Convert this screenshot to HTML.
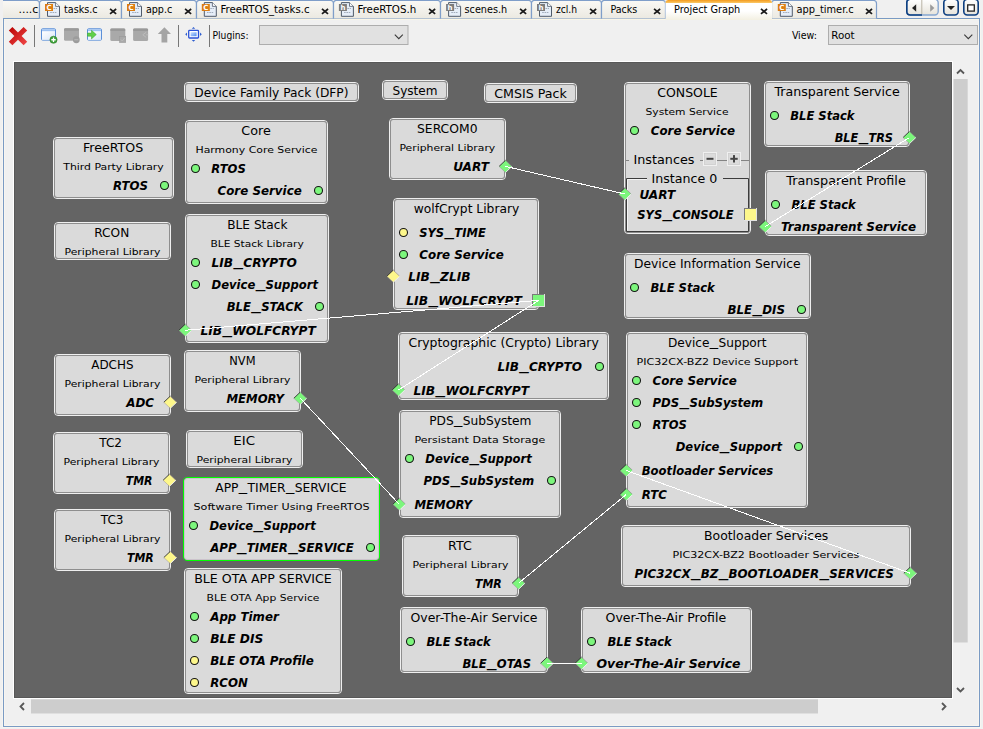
<!DOCTYPE html><html><head><meta charset="utf-8"><title>Project Graph</title><style>
html,body{margin:0;padding:0;background:#f0f0f0;overflow:hidden}svg{display:block}
text{fill:#000;white-space:pre}
.t{font-family:'DejaVu Sans','Liberation Sans',sans-serif;font-size:12px}.s{font-family:'DejaVu Sans','Liberation Sans',sans-serif;font-size:9.4px}.p{font-family:'DejaVu Sans','Liberation Sans',sans-serif;font-size:11.9px;font-weight:bold;font-style:italic}.u{font-family:'DejaVu Sans Condensed','DejaVu Sans','Liberation Sans',sans-serif;font-size:11px}
</style></head><body>
<svg width="983" height="729" viewBox="0 0 983 729">
<rect width="983" height="729" fill="#f0f0f0"/>
<defs>
<linearGradient id="gtab" x1="0" y1="0" x2="0" y2="1"><stop offset="0" stop-color="#faf9f5"/><stop offset="1" stop-color="#ebe9e1"/></linearGradient>
<linearGradient id="gsel" x1="0" y1="0" x2="0" y2="1"><stop offset="0" stop-color="#ffffff"/><stop offset="0.55" stop-color="#ffffff"/><stop offset="1" stop-color="#f3f0e2"/></linearGradient>
<linearGradient id="gor" x1="0" y1="0" x2="0" y2="1"><stop offset="0" stop-color="#f39a1d"/><stop offset="1" stop-color="#fbc968"/></linearGradient>
<linearGradient id="gwin" x1="0" y1="0" x2="1" y2="1"><stop offset="0" stop-color="#ffffff"/><stop offset="1" stop-color="#d9e6f8"/></linearGradient>
<linearGradient id="gbtn" x1="0" y1="0" x2="0" y2="1"><stop offset="0" stop-color="#ffffff"/><stop offset="1" stop-color="#e6e3da"/></linearGradient>
<linearGradient id="gred" x1="0" y1="0" x2="1" y2="1"><stop offset="0" stop-color="#b80000"/><stop offset="1" stop-color="#f24a4a"/></linearGradient>
<linearGradient id="gfit" x1="0" y1="0" x2="1" y2="1"><stop offset="0" stop-color="#cfe2ff"/><stop offset="1" stop-color="#4f8df0"/></linearGradient>
</defs>
<rect x="0" y="0" width="983" height="18" fill="#f0f0f0"/>
<rect x="3" y="18" width="977" height="1" fill="#7a9bc4"/>
<rect x="4" y="19" width="975" height="1" fill="#faf6e7"/>
<path d="M2.5 19V727.5H980.5V19" fill="none" stroke="#f7f5f1"/><path d="M4.5 21V725.5H978.5V21" fill="none" stroke="#f7f5f1"/>
<rect x="3" y="18" width="1" height="709" fill="#7a9bc4"/>
<rect x="979" y="18" width="1" height="709" fill="#7a9bc4"/>
<rect x="3" y="726" width="977" height="1" fill="#7a9bc4"/>
<rect x="3" y="0" width="36.5" height="18" fill="url(#gtab)"/>
<path d="M3 0.5H36.5Q39.5 0.5 39.5 3.5V18.5" fill="none" stroke="#7f9ec9" stroke-width="1.2"/>
<path d="M39.5 18.5V3.5Q39.5 0.5 42.5 0.5H118.5Q121.5 0.5 121.5 3.5V18.5" fill="url(#gtab)" stroke="#7f9ec9" stroke-width="1.2"/>
<path d="M121.5 18.5V3.5Q121.5 0.5 124.5 0.5H193.5Q196.5 0.5 196.5 3.5V18.5" fill="url(#gtab)" stroke="#7f9ec9" stroke-width="1.2"/>
<path d="M196.5 18.5V3.5Q196.5 0.5 199.5 0.5H330.5Q333.5 0.5 333.5 3.5V18.5" fill="url(#gtab)" stroke="#7f9ec9" stroke-width="1.2"/>
<path d="M333.5 18.5V3.5Q333.5 0.5 336.5 0.5H437.5Q440.5 0.5 440.5 3.5V18.5" fill="url(#gtab)" stroke="#7f9ec9" stroke-width="1.2"/>
<path d="M440.5 18.5V3.5Q440.5 0.5 443.5 0.5H528.5Q531.5 0.5 531.5 3.5V18.5" fill="url(#gtab)" stroke="#7f9ec9" stroke-width="1.2"/>
<path d="M531.5 18.5V3.5Q531.5 0.5 534.5 0.5H598.5Q601.5 0.5 601.5 3.5V18.5" fill="url(#gtab)" stroke="#7f9ec9" stroke-width="1.2"/>
<path d="M601.5 18.5V3.5Q601.5 0.5 604.5 0.5H662.5Q665.5 0.5 665.5 3.5V18.5" fill="url(#gtab)" stroke="#7f9ec9" stroke-width="1.2"/>
<path d="M771.5 18.5V3.5Q771.5 0.5 774.5 0.5H873.5Q876.5 0.5 876.5 3.5V18.5" fill="url(#gtab)" stroke="#7f9ec9" stroke-width="1.2"/>
<path d="M665.5 20V3Q665.5 0 668.5 0H769Q772 0 772 3V20Z" fill="url(#gsel)"/>
<path d="M665.5 3Q665.5 0 668.5 0H769Q772 0 772 3Z" fill="url(#gor)"/>
<text class="u" x="18.50" y="13.40" textLength="19.80" lengthAdjust="spacingAndGlyphs">....c</text>
<path d="M47.5 2.6H55.6L59.5 6.4V16.3H47.5Z" fill="#e6eef8" stroke="#4f5b6b" stroke-linejoin="miter"/>
<path d="M55.6 2.6V6.4H59.5" fill="#ffffff" stroke="#4f5b6b" stroke-width="0.8"/>
<path d="M53.5 8.5H57M50.2 10.5H52.5M50.2 12.5H57" stroke="#8f9bab" stroke-width="0.8" stroke-dasharray="1.6 0.7"/>
<rect x="45" y="4" width="8" height="7" fill="#dc7d12"/>
<text x="49" y="10.1" text-anchor="middle" style="font-family:'DejaVu Sans','Liberation Sans',sans-serif;font-size:7px;font-weight:bold;fill:#fff">C</text>
<text class="u" x="64.00" y="13.40" textLength="33.50" lengthAdjust="spacingAndGlyphs">tasks.c</text>
<path d="M110.7 9.5L115.5 13.4M115.5 9.5L110.7 13.4" stroke="#1a1a1a" stroke-width="1.7" stroke-linecap="square" fill="none"/>
<path d="M129.5 2.6H137.6L141.5 6.4V16.3H129.5Z" fill="#e6eef8" stroke="#4f5b6b" stroke-linejoin="miter"/>
<path d="M137.6 2.6V6.4H141.5" fill="#ffffff" stroke="#4f5b6b" stroke-width="0.8"/>
<path d="M135.5 8.5H139M132.2 10.5H134.5M132.2 12.5H139" stroke="#8f9bab" stroke-width="0.8" stroke-dasharray="1.6 0.7"/>
<rect x="127" y="4" width="8" height="7" fill="#dc7d12"/>
<text x="131" y="10.1" text-anchor="middle" style="font-family:'DejaVu Sans','Liberation Sans',sans-serif;font-size:7px;font-weight:bold;fill:#fff">C</text>
<text class="u" x="145.90" y="13.40" textLength="26.35" lengthAdjust="spacingAndGlyphs">app.c</text>
<path d="M185.7 9.5L190.5 13.4M190.5 9.5L185.7 13.4" stroke="#1a1a1a" stroke-width="1.7" stroke-linecap="square" fill="none"/>
<path d="M204.3 2.6H212.4L216.3 6.4V16.3H204.3Z" fill="#e6eef8" stroke="#4f5b6b" stroke-linejoin="miter"/>
<path d="M212.4 2.6V6.4H216.3" fill="#ffffff" stroke="#4f5b6b" stroke-width="0.8"/>
<path d="M210.3 8.5H213.8M207.0 10.5H209.3M207.0 12.5H213.8" stroke="#8f9bab" stroke-width="0.8" stroke-dasharray="1.6 0.7"/>
<rect x="201.8" y="4" width="8" height="7" fill="#dc7d12"/>
<text x="205.8" y="10.1" text-anchor="middle" style="font-family:'DejaVu Sans','Liberation Sans',sans-serif;font-size:7px;font-weight:bold;fill:#fff">C</text>
<text class="u" x="220.60" y="13.40" textLength="89.00" lengthAdjust="spacingAndGlyphs">FreeRTOS_tasks.c</text>
<path d="M322.59999999999997 9.5L327.4 13.4M327.4 9.5L322.59999999999997 13.4" stroke="#1a1a1a" stroke-width="1.7" stroke-linecap="square" fill="none"/>
<path d="M341.4 2.6H349.5L353.4 6.4V16.3H341.4Z" fill="#e6eef8" stroke="#4f5b6b" stroke-linejoin="miter"/>
<path d="M349.5 2.6V6.4H353.4" fill="#ffffff" stroke="#4f5b6b" stroke-width="0.8"/>
<path d="M347.4 8.5H350.9M344.09999999999997 10.5H346.4M344.09999999999997 12.5H350.9" stroke="#8f9bab" stroke-width="0.8" stroke-dasharray="1.6 0.7"/>
<rect x="338.9" y="4" width="8" height="7" fill="#7c7c7c"/>
<text x="342.9" y="10.1" text-anchor="middle" style="font-family:'DejaVu Sans','Liberation Sans',sans-serif;font-size:7px;font-weight:bold;fill:#fff">h</text>
<text class="u" x="357.50" y="13.40" textLength="58.75" lengthAdjust="spacingAndGlyphs">FreeRTOS.h</text>
<path d="M429.7 9.5L434.5 13.4M434.5 9.5L429.7 13.4" stroke="#1a1a1a" stroke-width="1.7" stroke-linecap="square" fill="none"/>
<path d="M448.6 2.6H456.70000000000005L460.6 6.4V16.3H448.6Z" fill="#e6eef8" stroke="#4f5b6b" stroke-linejoin="miter"/>
<path d="M456.70000000000005 2.6V6.4H460.6" fill="#ffffff" stroke="#4f5b6b" stroke-width="0.8"/>
<path d="M454.6 8.5H458.1M451.3 10.5H453.6M451.3 12.5H458.1" stroke="#8f9bab" stroke-width="0.8" stroke-dasharray="1.6 0.7"/>
<rect x="446.1" y="4" width="8" height="7" fill="#7c7c7c"/>
<text x="450.1" y="10.1" text-anchor="middle" style="font-family:'DejaVu Sans','Liberation Sans',sans-serif;font-size:7px;font-weight:bold;fill:#fff">h</text>
<text class="u" x="464.60" y="13.40" textLength="42.50" lengthAdjust="spacingAndGlyphs">scenes.h</text>
<path d="M520.7 9.5L525.5 13.4M525.5 9.5L520.7 13.4" stroke="#1a1a1a" stroke-width="1.7" stroke-linecap="square" fill="none"/>
<path d="M539.5 2.6H547.6L551.5 6.4V16.3H539.5Z" fill="#e6eef8" stroke="#4f5b6b" stroke-linejoin="miter"/>
<path d="M547.6 2.6V6.4H551.5" fill="#ffffff" stroke="#4f5b6b" stroke-width="0.8"/>
<path d="M545.5 8.5H549M542.2 10.5H544.5M542.2 12.5H549" stroke="#8f9bab" stroke-width="0.8" stroke-dasharray="1.6 0.7"/>
<rect x="537" y="4" width="8" height="7" fill="#7c7c7c"/>
<text x="541" y="10.1" text-anchor="middle" style="font-family:'DejaVu Sans','Liberation Sans',sans-serif;font-size:7px;font-weight:bold;fill:#fff">h</text>
<text class="u" x="555.90" y="13.40" textLength="21.20" lengthAdjust="spacingAndGlyphs">zcl.h</text>
<path d="M590.7 9.5L595.5 13.4M595.5 9.5L590.7 13.4" stroke="#1a1a1a" stroke-width="1.7" stroke-linecap="square" fill="none"/>
<text class="u" x="610.40" y="13.40" textLength="26.85" lengthAdjust="spacingAndGlyphs">Packs</text>
<path d="M654.7 9.5L659.5 13.4M659.5 9.5L654.7 13.4" stroke="#1a1a1a" stroke-width="1.7" stroke-linecap="square" fill="none"/>
<text class="u" x="674.10" y="13.40" textLength="66.15" lengthAdjust="spacingAndGlyphs">Project Graph</text>
<path d="M761.6 9.5L766.4 13.4M766.4 9.5L761.6 13.4" stroke="#1a1a1a" stroke-width="1.7" stroke-linecap="square" fill="none"/>
<path d="M780.3 2.6H788.4L792.3 6.4V16.3H780.3Z" fill="#e6eef8" stroke="#4f5b6b" stroke-linejoin="miter"/>
<path d="M788.4 2.6V6.4H792.3" fill="#ffffff" stroke="#4f5b6b" stroke-width="0.8"/>
<path d="M786.3 8.5H789.8M783.0 10.5H785.3M783.0 12.5H789.8" stroke="#8f9bab" stroke-width="0.8" stroke-dasharray="1.6 0.7"/>
<rect x="777.8" y="4" width="8" height="7" fill="#dc7d12"/>
<text x="781.8" y="10.1" text-anchor="middle" style="font-family:'DejaVu Sans','Liberation Sans',sans-serif;font-size:7px;font-weight:bold;fill:#fff">C</text>
<text class="u" x="796.50" y="13.40" textLength="57.25" lengthAdjust="spacingAndGlyphs">app_timer.c</text>
<path d="M866.6 9.5L871.4 13.4M871.4 9.5L866.6 13.4" stroke="#1a1a1a" stroke-width="1.7" stroke-linecap="square" fill="none"/>
<rect x="906.8" y="-0.8" width="31.4" height="15.8" rx="3.5" fill="url(#gbtn)" stroke="#87a7d0" stroke-width="1.4"/>
<path d="M922 -0.8H910.3Q906.8 -0.8 906.8 2.7V11.5Q906.8 15 910.3 15H922" fill="none" stroke="#0d3f80" stroke-width="1.6"/>
<rect x="921.3" y="0" width="1" height="14" fill="#b9b4a6"/>
<path d="M916.2 4.2V11.8L912 8Z" fill="#222"/>
<path d="M930.2 4.2V11.8L934.4 8Z" fill="#9b9b9b"/>
<rect x="943.8" y="-0.8" width="14.4" height="15.8" rx="3.5" fill="url(#gbtn)" stroke="#0d3f80" stroke-width="1.6"/>
<path d="M947 6H955L951 10Z" fill="#222"/>
<rect x="963.8" y="-0.8" width="14.4" height="15.8" rx="3.5" fill="url(#gbtn)" stroke="#0d3f80" stroke-width="1.6"/>
<rect x="967.7" y="4.9" width="6.6" height="6.2" fill="#fff" stroke="#222" stroke-width="1.3"/>
<g transform="translate(18 36.1)"><path d="M-9.2 -5.6L-5.6 -9.2L0 -3.6L5.6 -9.2L9.2 -5.6L3.6 0L9.2 5.6L5.6 9.2L0 3.6L-5.6 9.2L-9.2 5.6L-3.6 0Z" fill="url(#gred)"/></g>
<rect x="34.0" y="25" width="1" height="22" fill="#777"/>
<rect x="178.0" y="25" width="1" height="22" fill="#777"/>
<rect x="209.0" y="25" width="1" height="22" fill="#777"/>
<rect x="41.5" y="28.75" width="14" height="11.4" rx="1" fill="#ffffff" stroke="#5b8fd8"/>
<rect x="42" y="29.25" width="13" height="2.2" fill="#9ec2f2"/>
<rect x="42" y="31.45" width="13" height="8.2" fill="url(#gwin)"/>
<circle cx="53.5" cy="39.75" r="3.6" fill="#3fa33a" stroke="#2a7a26" stroke-width="0.6"/><path d="M51.3 39.75H55.7M53.5 37.55V41.95" stroke="#fff" stroke-width="1.3"/>
<rect x="64" y="28.25" width="15" height="12.4" rx="1.5" fill="#a9a9a9"/>
<rect x="64" y="28.25" width="15" height="2.6" rx="1.2" fill="#999999"/>
<circle cx="76.3" cy="39.75" r="3.4" fill="#9c9c9c"/><path d="M74.3 39.75H78.3" stroke="#b5b5b5" stroke-width="1.2"/>
<rect x="87.5" y="28.75" width="14" height="11.4" rx="1" fill="#ffffff" stroke="#5b8fd8"/>
<rect x="88" y="29.25" width="13" height="2.2" fill="#9ec2f2"/>
<rect x="88" y="31.45" width="13" height="8.2" fill="url(#gwin)"/>
<path d="M87.5 33H91.5V30.3L96.3 34.6L91.5 38.9V36.2H87.5Z" fill="#5fd04a" stroke="#3aa52e" stroke-width="0.5"/>
<rect x="110.3" y="28.5" width="15" height="12.4" rx="1.5" fill="#a9a9a9"/>
<rect x="110.3" y="28.5" width="15" height="2.6" rx="1.2" fill="#999999"/>
<rect x="119.5" y="36.3" width="6.2" height="6.2" fill="#a9a9a9" stroke="#9a9a9a" stroke-width="0.6"/><path d="M120.8 39.4L122.3 41L124.6 38" stroke="#bdbdbd" stroke-width="0.9" fill="none"/>
<rect x="133.1" y="28.5" width="15" height="12.4" rx="1.5" fill="#a9a9a9"/>
<rect x="133.1" y="28.5" width="15" height="2.6" rx="1.2" fill="#999999"/>
<path d="M148.2 34.8H146.2M146.2 32.2L142.8 34.8L146.2 37.4" stroke="#bdbdbd" stroke-width="0.9" fill="none"/>
<path d="M164.4 27.3L171 34H167.3V42.5H161.5V34H157.8Z" fill="#a4a4a4"/>
<rect x="188.7" y="30.4" width="9.8" height="7.6" rx="0.8" fill="#ffffff" stroke="#2a52d6" stroke-width="1.3"/><rect x="190.6" y="32.2" width="6" height="4" fill="url(#gfit)"/>
<path d="M193.5 26.9L195.2 28.7H191.8ZM193.5 41.8L195.2 40H191.8ZM185.2 34.3L187 32.6V36ZM201.8 34.3L200 32.6V36Z" fill="#2f5fd0"/>
<text class="u" x="212.50" y="38.50" textLength="36.00" lengthAdjust="spacingAndGlyphs">Plugins:</text>
<rect x="259.5" y="25.5" width="148.5" height="19" fill="#e1e1e1" stroke="#adadad"/>
<path d="M394.8 34.6L398.8 38.6L402.8 34.6" stroke="#3a3a3a" stroke-width="1.1" fill="none"/>
<text class="u" x="791.90" y="38.50" textLength="25.00" lengthAdjust="spacingAndGlyphs">View:</text>
<rect x="828.5" y="25.5" width="149" height="19" fill="#e1e1e1" stroke="#adadad"/>
<path d="M964.3 34.6L968.3 38.6L972.3 34.6" stroke="#3a3a3a" stroke-width="1.1" fill="none"/>
<text class="u" x="831.25" y="38.50" textLength="23.35" lengthAdjust="spacingAndGlyphs">Root</text>
<rect x="13" y="61" width="940" height="638" fill="#ffffff"/>
<rect x="14" y="62" width="938" height="636" fill="#585858"/>
<rect x="15" y="63" width="936" height="634" fill="#646464"/>
<rect x="184.5" y="82.5" width="174" height="19" rx="3.5" fill="none" stroke="#efefef"/>
<rect x="185.5" y="83.5" width="172" height="17" rx="2.5" fill="#dadada" stroke="#8e8e8e"/>
<text class="t" x="194.25" y="97.00" textLength="154.25" lengthAdjust="spacingAndGlyphs">Device Family Pack (DFP)</text>
<rect x="382.5" y="80.5" width="65" height="19" rx="3.5" fill="none" stroke="#efefef"/>
<rect x="383.5" y="81.5" width="63" height="17" rx="2.5" fill="#dadada" stroke="#8e8e8e"/>
<text class="t" x="392.50" y="95.00" textLength="45.00" lengthAdjust="spacingAndGlyphs">System</text>
<rect x="484.5" y="83.5" width="92" height="19" rx="3.5" fill="none" stroke="#efefef"/>
<rect x="485.5" y="84.5" width="90" height="17" rx="2.5" fill="#dadada" stroke="#8e8e8e"/>
<text class="t" x="494.25" y="98.00" textLength="72.50" lengthAdjust="spacingAndGlyphs">CMSIS Pack</text>
<rect x="53.5" y="137.5" width="120" height="61" rx="3.5" fill="none" stroke="#efefef"/>
<rect x="54.5" y="138.5" width="118" height="59" rx="2.5" fill="#dadada" stroke="#8e8e8e"/>
<text class="t" x="83.00" y="152.00" textLength="60.25" lengthAdjust="spacingAndGlyphs">FreeRTOS</text>
<text class="s" x="63.25" y="170.00" textLength="100.50" lengthAdjust="spacingAndGlyphs">Third Party Library</text>
<text class="p" x="113.00" y="190.00" textLength="35.00" lengthAdjust="spacingAndGlyphs">RTOS</text>
<circle cx="164.5" cy="185.5" r="4" fill="#7cf67c" stroke="#161616" stroke-width="1.1"/>
<rect x="185.5" y="120.5" width="142" height="83" rx="3.5" fill="none" stroke="#efefef"/>
<rect x="186.5" y="121.5" width="140" height="81" rx="2.5" fill="#dadada" stroke="#8e8e8e"/>
<text class="t" x="241.25" y="135.00" textLength="29.50" lengthAdjust="spacingAndGlyphs">Core</text>
<text class="s" x="195.50" y="153.00" textLength="122.00" lengthAdjust="spacingAndGlyphs">Harmony Core Service</text>
<text class="p" x="211.25" y="173.00" textLength="34.50" lengthAdjust="spacingAndGlyphs">RTOS</text>
<circle cx="195.5" cy="168.5" r="4" fill="#7cf67c" stroke="#161616" stroke-width="1.1"/>
<text class="p" x="217.50" y="195.00" textLength="84.25" lengthAdjust="spacingAndGlyphs">Core Service</text>
<circle cx="318.5" cy="190.5" r="4" fill="#7cf67c" stroke="#161616" stroke-width="1.1"/>
<rect x="54.5" y="222.5" width="116" height="37" rx="3.5" fill="none" stroke="#efefef"/>
<rect x="55.5" y="223.5" width="114" height="35" rx="2.5" fill="#dadada" stroke="#8e8e8e"/>
<text class="t" x="94.25" y="237.00" textLength="35.00" lengthAdjust="spacingAndGlyphs">RCON</text>
<text class="s" x="64.50" y="255.00" textLength="96.00" lengthAdjust="spacingAndGlyphs">Peripheral Library</text>
<rect x="185.5" y="214.5" width="143" height="128" rx="3.5" fill="none" stroke="#efefef"/>
<rect x="186.5" y="215.5" width="141" height="126" rx="2.5" fill="#dadada" stroke="#8e8e8e"/>
<text class="t" x="227.25" y="229.00" textLength="60.25" lengthAdjust="spacingAndGlyphs">BLE Stack</text>
<text class="s" x="210.50" y="247.00" textLength="93.25" lengthAdjust="spacingAndGlyphs">BLE Stack Library</text>
<text class="p"><tspan x="211.50" y="267.00" textLength="21.54" lengthAdjust="spacingAndGlyphs">LIB</tspan><tspan x="233.44" y="266.00" textLength="9.40" lengthAdjust="spacingAndGlyphs">_</tspan><tspan x="243.24" y="267.00" textLength="53.51" lengthAdjust="spacingAndGlyphs">CRYPTO</tspan></text>
<circle cx="195.5" cy="262.5" r="4" fill="#7cf67c" stroke="#161616" stroke-width="1.1"/>
<text class="p"><tspan x="211.50" y="289.00" textLength="43.81" lengthAdjust="spacingAndGlyphs">Device</tspan><tspan x="255.71" y="288.00" textLength="9.40" lengthAdjust="spacingAndGlyphs">_</tspan><tspan x="265.51" y="289.00" textLength="52.49" lengthAdjust="spacingAndGlyphs">Support</tspan></text>
<circle cx="195.5" cy="284.5" r="4" fill="#7cf67c" stroke="#161616" stroke-width="1.1"/>
<text class="p"><tspan x="226.75" y="311.00" textLength="24.21" lengthAdjust="spacingAndGlyphs">BLE</tspan><tspan x="251.36" y="310.00" textLength="9.40" lengthAdjust="spacingAndGlyphs">_</tspan><tspan x="261.16" y="311.00" textLength="41.59" lengthAdjust="spacingAndGlyphs">STACK</tspan></text>
<circle cx="319.5" cy="306.5" r="4" fill="#7cf67c" stroke="#161616" stroke-width="1.1"/>
<text class="p"><tspan x="200.50" y="335.00" textLength="21.65" lengthAdjust="spacingAndGlyphs">LIB</tspan><tspan x="222.55" y="334.00" textLength="9.40" lengthAdjust="spacingAndGlyphs">_</tspan><tspan x="232.35" y="335.00" textLength="83.40" lengthAdjust="spacingAndGlyphs">WOLFCRYPT</tspan></text>
<polygon points="178.85,330.25 185.25,324.15 191.65,330.25 185.25,336.35" fill="#7cf67c"/>
<path d="M178.85 330.25L185.25 324.15" stroke="#2e2e2e" stroke-width="0.9" fill="none"/>
<path d="M185.25 324.15L191.65 330.25" stroke="#8d7f8d" stroke-width="0.6" fill="none"/>
<path d="M191.65 330.25L185.25 336.35" stroke="#f2f2f2" stroke-width="0.9" fill="none"/>
<path d="M185.25 336.35L178.85 330.25" stroke="#9a909a" stroke-width="0.5" fill="none"/>
<rect x="389.5" y="118.5" width="116" height="61" rx="3.5" fill="none" stroke="#efefef"/>
<rect x="390.5" y="119.5" width="114" height="59" rx="2.5" fill="#dadada" stroke="#8e8e8e"/>
<text class="t" x="417.00" y="133.00" textLength="60.50" lengthAdjust="spacingAndGlyphs">SERCOM0</text>
<text class="s" x="399.50" y="151.00" textLength="95.75" lengthAdjust="spacingAndGlyphs">Peripheral Library</text>
<text class="p" x="453.25" y="171.00" textLength="35.75" lengthAdjust="spacingAndGlyphs">UART</text>
<polygon points="499.1,166.4 505.5,160.3 511.9,166.4 505.5,172.5" fill="#7cf67c"/>
<path d="M499.1 166.4L505.5 160.3" stroke="#2e2e2e" stroke-width="0.9" fill="none"/>
<path d="M505.5 160.3L511.9 166.4" stroke="#8d7f8d" stroke-width="0.6" fill="none"/>
<path d="M511.9 166.4L505.5 172.5" stroke="#f2f2f2" stroke-width="0.9" fill="none"/>
<path d="M505.5 172.5L499.1 166.4" stroke="#9a909a" stroke-width="0.5" fill="none"/>
<rect x="393.5" y="198.5" width="145" height="111" rx="3.5" fill="none" stroke="#efefef"/>
<rect x="394.5" y="199.5" width="143" height="109" rx="2.5" fill="#dadada" stroke="#8e8e8e"/>
<text class="t" x="413.75" y="213.00" textLength="105.50" lengthAdjust="spacingAndGlyphs">wolfCrypt Library</text>
<text class="p"><tspan x="419.25" y="237.00" textLength="24.88" lengthAdjust="spacingAndGlyphs">SYS</tspan><tspan x="444.53" y="236.00" textLength="9.40" lengthAdjust="spacingAndGlyphs">_</tspan><tspan x="454.33" y="237.00" textLength="31.42" lengthAdjust="spacingAndGlyphs">TIME</tspan></text>
<circle cx="403.5" cy="232.5" r="4" fill="#fdf78b" stroke="#161616" stroke-width="1.1"/>
<text class="p" x="419.25" y="259.00" textLength="84.50" lengthAdjust="spacingAndGlyphs">Core Service</text>
<circle cx="403.5" cy="254.5" r="4" fill="#7cf67c" stroke="#161616" stroke-width="1.1"/>
<text class="p"><tspan x="408.25" y="281.00" textLength="21.60" lengthAdjust="spacingAndGlyphs">LIB</tspan><tspan x="430.25" y="280.00" textLength="9.40" lengthAdjust="spacingAndGlyphs">_</tspan><tspan x="440.05" y="281.00" textLength="30.45" lengthAdjust="spacingAndGlyphs">ZLIB</tspan></text>
<polygon points="386.85,276.25 393.25,270.15 399.65,276.25 393.25,282.35" fill="#fdf78b"/>
<path d="M386.85 276.25L393.25 270.15" stroke="#2e2e2e" stroke-width="0.9" fill="none"/>
<path d="M393.25 270.15L399.65 276.25" stroke="#8d7f8d" stroke-width="0.6" fill="none"/>
<path d="M399.65 276.25L393.25 282.35" stroke="#f2f2f2" stroke-width="0.9" fill="none"/>
<path d="M393.25 282.35L386.85 276.25" stroke="#9a909a" stroke-width="0.5" fill="none"/>
<text class="p"><tspan x="406.25" y="305.00" textLength="21.75" lengthAdjust="spacingAndGlyphs">LIB</tspan><tspan x="428.40" y="304.00" textLength="9.40" lengthAdjust="spacingAndGlyphs">_</tspan><tspan x="438.20" y="305.00" textLength="83.80" lengthAdjust="spacingAndGlyphs">WOLFCRYPT</tspan></text>
<rect x="532" y="294" width="13" height="13" fill="#e2e2e2"/>
<rect x="532" y="294" width="12" height="12" fill="#7a7a7a"/>
<rect x="533" y="295" width="11" height="11" fill="#7cf67c"/>
<rect x="398.5" y="332.5" width="210" height="67" rx="3.5" fill="none" stroke="#efefef"/>
<rect x="399.5" y="333.5" width="208" height="65" rx="2.5" fill="#dadada" stroke="#8e8e8e"/>
<text class="t" x="408.50" y="347.00" textLength="190.25" lengthAdjust="spacingAndGlyphs">Cryptographic (Crypto) Library</text>
<text class="p"><tspan x="497.50" y="371.00" textLength="21.32" lengthAdjust="spacingAndGlyphs">LIB</tspan><tspan x="519.22" y="370.00" textLength="9.40" lengthAdjust="spacingAndGlyphs">_</tspan><tspan x="529.02" y="371.00" textLength="52.98" lengthAdjust="spacingAndGlyphs">CRYPTO</tspan></text>
<circle cx="599.5" cy="366.5" r="4" fill="#7cf67c" stroke="#161616" stroke-width="1.1"/>
<text class="p"><tspan x="413.50" y="395.00" textLength="21.70" lengthAdjust="spacingAndGlyphs">LIB</tspan><tspan x="435.60" y="394.00" textLength="9.40" lengthAdjust="spacingAndGlyphs">_</tspan><tspan x="445.40" y="395.00" textLength="83.60" lengthAdjust="spacingAndGlyphs">WOLFCRYPT</tspan></text>
<polygon points="392.1,390 398.5,383.9 404.9,390 398.5,396.1" fill="#7cf67c"/>
<path d="M392.1 390L398.5 383.9" stroke="#2e2e2e" stroke-width="0.9" fill="none"/>
<path d="M398.5 383.9L404.9 390" stroke="#8d7f8d" stroke-width="0.6" fill="none"/>
<path d="M404.9 390L398.5 396.1" stroke="#f2f2f2" stroke-width="0.9" fill="none"/>
<path d="M398.5 396.1L392.1 390" stroke="#9a909a" stroke-width="0.5" fill="none"/>
<rect x="764.5" y="81.5" width="145" height="65" rx="3.5" fill="none" stroke="#efefef"/>
<rect x="765.5" y="82.5" width="143" height="63" rx="2.5" fill="#dadada" stroke="#8e8e8e"/>
<text class="t" x="774.50" y="96.00" textLength="125.25" lengthAdjust="spacingAndGlyphs">Transparent Service</text>
<text class="p" x="790.25" y="120.00" textLength="64.25" lengthAdjust="spacingAndGlyphs">BLE Stack</text>
<circle cx="774.5" cy="115.5" r="4" fill="#7cf67c" stroke="#161616" stroke-width="1.1"/>
<text class="p"><tspan x="834.75" y="142.00" textLength="23.52" lengthAdjust="spacingAndGlyphs">BLE</tspan><tspan x="858.67" y="141.00" textLength="9.40" lengthAdjust="spacingAndGlyphs">_</tspan><tspan x="868.47" y="142.00" textLength="24.53" lengthAdjust="spacingAndGlyphs">TRS</tspan></text>
<polygon points="903.1,137.5 909.5,131.4 915.9,137.5 909.5,143.6" fill="#7cf67c"/>
<path d="M903.1 137.5L909.5 131.4" stroke="#2e2e2e" stroke-width="0.9" fill="none"/>
<path d="M909.5 131.4L915.9 137.5" stroke="#8d7f8d" stroke-width="0.6" fill="none"/>
<path d="M915.9 137.5L909.5 143.6" stroke="#f2f2f2" stroke-width="0.9" fill="none"/>
<path d="M909.5 143.6L903.1 137.5" stroke="#9a909a" stroke-width="0.5" fill="none"/>
<rect x="765.5" y="170.5" width="161" height="65" rx="3.5" fill="none" stroke="#efefef"/>
<rect x="766.5" y="171.5" width="159" height="63" rx="2.5" fill="#dadada" stroke="#8e8e8e"/>
<text class="t" x="786.25" y="185.00" textLength="119.50" lengthAdjust="spacingAndGlyphs">Transparent Profile</text>
<text class="p" x="791.50" y="209.00" textLength="64.25" lengthAdjust="spacingAndGlyphs">BLE Stack</text>
<circle cx="775.5" cy="204.5" r="4" fill="#7cf67c" stroke="#161616" stroke-width="1.1"/>
<text class="p" x="781.00" y="231.00" textLength="135.00" lengthAdjust="spacingAndGlyphs">Transparent Service</text>
<polygon points="758.85,226.5 765.25,220.4 771.65,226.5 765.25,232.6" fill="#7cf67c"/>
<path d="M758.85 226.5L765.25 220.4" stroke="#2e2e2e" stroke-width="0.9" fill="none"/>
<path d="M765.25 220.4L771.65 226.5" stroke="#8d7f8d" stroke-width="0.6" fill="none"/>
<path d="M771.65 226.5L765.25 232.6" stroke="#f2f2f2" stroke-width="0.9" fill="none"/>
<path d="M765.25 232.6L758.85 226.5" stroke="#9a909a" stroke-width="0.5" fill="none"/>
<rect x="624.5" y="253.5" width="186" height="65" rx="3.5" fill="none" stroke="#efefef"/>
<rect x="625.5" y="254.5" width="184" height="63" rx="2.5" fill="#dadada" stroke="#8e8e8e"/>
<text class="t" x="634.00" y="268.00" textLength="166.50" lengthAdjust="spacingAndGlyphs">Device Information Service</text>
<text class="p" x="650.50" y="292.00" textLength="64.25" lengthAdjust="spacingAndGlyphs">BLE Stack</text>
<circle cx="634.5" cy="287.5" r="4" fill="#7cf67c" stroke="#161616" stroke-width="1.1"/>
<text class="p"><tspan x="727.50" y="314.00" textLength="24.60" lengthAdjust="spacingAndGlyphs">BLE</tspan><tspan x="752.50" y="313.00" textLength="9.40" lengthAdjust="spacingAndGlyphs">_</tspan><tspan x="762.30" y="314.00" textLength="22.70" lengthAdjust="spacingAndGlyphs">DIS</tspan></text>
<circle cx="801.5" cy="309.5" r="4" fill="#7cf67c" stroke="#161616" stroke-width="1.1"/>
<rect x="626.5" y="332.5" width="181" height="175" rx="3.5" fill="none" stroke="#efefef"/>
<rect x="627.5" y="333.5" width="179" height="173" rx="2.5" fill="#dadada" stroke="#8e8e8e"/>
<text class="t"><tspan x="668.00" y="347.00" textLength="41.47" lengthAdjust="spacingAndGlyphs">Device</tspan><tspan x="709.87" y="346.00" textLength="8.30" lengthAdjust="spacingAndGlyphs">_</tspan><tspan x="718.57" y="347.00" textLength="47.93" lengthAdjust="spacingAndGlyphs">Support</tspan></text>
<text class="s" x="636.50" y="365.00" textLength="161.50" lengthAdjust="spacingAndGlyphs">PIC32CX-BZ2 Device Support</text>
<text class="p" x="652.50" y="385.00" textLength="84.25" lengthAdjust="spacingAndGlyphs">Core Service</text>
<circle cx="636.5" cy="380.5" r="4" fill="#7cf67c" stroke="#161616" stroke-width="1.1"/>
<text class="p"><tspan x="652.50" y="407.00" textLength="26.71" lengthAdjust="spacingAndGlyphs">PDS</tspan><tspan x="679.61" y="406.00" textLength="9.40" lengthAdjust="spacingAndGlyphs">_</tspan><tspan x="689.41" y="407.00" textLength="73.84" lengthAdjust="spacingAndGlyphs">SubSystem</tspan></text>
<circle cx="636.5" cy="402.5" r="4" fill="#7cf67c" stroke="#161616" stroke-width="1.1"/>
<text class="p" x="652.50" y="429.00" textLength="34.25" lengthAdjust="spacingAndGlyphs">RTOS</text>
<circle cx="636.5" cy="424.5" r="4" fill="#7cf67c" stroke="#161616" stroke-width="1.1"/>
<text class="p"><tspan x="675.75" y="451.00" textLength="43.70" lengthAdjust="spacingAndGlyphs">Device</tspan><tspan x="719.85" y="450.00" textLength="9.40" lengthAdjust="spacingAndGlyphs">_</tspan><tspan x="729.65" y="451.00" textLength="52.35" lengthAdjust="spacingAndGlyphs">Support</tspan></text>
<circle cx="798.5" cy="446.5" r="4" fill="#7cf67c" stroke="#161616" stroke-width="1.1"/>
<text class="p" x="641.75" y="475.00" textLength="131.50" lengthAdjust="spacingAndGlyphs">Bootloader Services</text>
<polygon points="619.85,470.5 626.25,464.4 632.65,470.5 626.25,476.6" fill="#7cf67c"/>
<path d="M619.85 470.5L626.25 464.4" stroke="#2e2e2e" stroke-width="0.9" fill="none"/>
<path d="M626.25 464.4L632.65 470.5" stroke="#8d7f8d" stroke-width="0.6" fill="none"/>
<path d="M632.65 470.5L626.25 476.6" stroke="#f2f2f2" stroke-width="0.9" fill="none"/>
<path d="M626.25 476.6L619.85 470.5" stroke="#9a909a" stroke-width="0.5" fill="none"/>
<text class="p" x="641.75" y="499.00" textLength="25.25" lengthAdjust="spacingAndGlyphs">RTC</text>
<polygon points="619.85,494.5 626.25,488.4 632.65,494.5 626.25,500.6" fill="#7cf67c"/>
<path d="M619.85 494.5L626.25 488.4" stroke="#2e2e2e" stroke-width="0.9" fill="none"/>
<path d="M626.25 488.4L632.65 494.5" stroke="#8d7f8d" stroke-width="0.6" fill="none"/>
<path d="M632.65 494.5L626.25 500.6" stroke="#f2f2f2" stroke-width="0.9" fill="none"/>
<path d="M626.25 500.6L619.85 494.5" stroke="#9a909a" stroke-width="0.5" fill="none"/>
<rect x="621.5" y="525.5" width="289" height="61" rx="3.5" fill="none" stroke="#efefef"/>
<rect x="622.5" y="526.5" width="287" height="59" rx="2.5" fill="#dadada" stroke="#8e8e8e"/>
<text class="t" x="704.00" y="540.00" textLength="124.25" lengthAdjust="spacingAndGlyphs">Bootloader Services</text>
<text class="s" x="672.50" y="558.00" textLength="186.75" lengthAdjust="spacingAndGlyphs">PIC32CX-BZ2 Bootloader Services</text>
<text class="p"><tspan x="634.50" y="578.00" textLength="56.01" lengthAdjust="spacingAndGlyphs">PIC32CX</tspan><tspan x="690.91" y="577.00" textLength="9.40" lengthAdjust="spacingAndGlyphs">_</tspan><tspan x="700.71" y="578.00" textLength="17.59" lengthAdjust="spacingAndGlyphs">BZ</tspan><tspan x="718.70" y="577.00" textLength="9.40" lengthAdjust="spacingAndGlyphs">_</tspan><tspan x="728.50" y="578.00" textLength="90.52" lengthAdjust="spacingAndGlyphs">BOOTLOADER</tspan><tspan x="819.42" y="577.00" textLength="9.40" lengthAdjust="spacingAndGlyphs">_</tspan><tspan x="829.22" y="578.00" textLength="64.53" lengthAdjust="spacingAndGlyphs">SERVICES</tspan></text>
<polygon points="903.85,573.25 910.25,567.15 916.65,573.25 910.25,579.35" fill="#7cf67c"/>
<path d="M903.85 573.25L910.25 567.15" stroke="#2e2e2e" stroke-width="0.9" fill="none"/>
<path d="M910.25 567.15L916.65 573.25" stroke="#8d7f8d" stroke-width="0.6" fill="none"/>
<path d="M916.65 573.25L910.25 579.35" stroke="#f2f2f2" stroke-width="0.9" fill="none"/>
<path d="M910.25 579.35L903.85 573.25" stroke="#9a909a" stroke-width="0.5" fill="none"/>
<rect x="54.5" y="354.5" width="116" height="61" rx="3.5" fill="none" stroke="#efefef"/>
<rect x="55.5" y="355.5" width="114" height="59" rx="2.5" fill="#dadada" stroke="#8e8e8e"/>
<text class="t" x="91.25" y="369.00" textLength="42.25" lengthAdjust="spacingAndGlyphs">ADCHS</text>
<text class="s" x="64.50" y="387.00" textLength="96.00" lengthAdjust="spacingAndGlyphs">Peripheral Library</text>
<text class="p" x="126.25" y="407.00" textLength="27.75" lengthAdjust="spacingAndGlyphs">ADC</text>
<polygon points="163.85,402.25 170.25,396.15 176.65,402.25 170.25,408.35" fill="#fdf78b"/>
<path d="M163.85 402.25L170.25 396.15" stroke="#2e2e2e" stroke-width="0.9" fill="none"/>
<path d="M170.25 396.15L176.65 402.25" stroke="#8d7f8d" stroke-width="0.6" fill="none"/>
<path d="M176.65 402.25L170.25 408.35" stroke="#f2f2f2" stroke-width="0.9" fill="none"/>
<path d="M170.25 408.35L163.85 402.25" stroke="#9a909a" stroke-width="0.5" fill="none"/>
<rect x="184.5" y="350.5" width="116" height="61" rx="3.5" fill="none" stroke="#efefef"/>
<rect x="185.5" y="351.5" width="114" height="59" rx="2.5" fill="#dadada" stroke="#8e8e8e"/>
<text class="t" x="229.25" y="365.00" textLength="26.25" lengthAdjust="spacingAndGlyphs">NVM</text>
<text class="s" x="194.50" y="383.00" textLength="96.00" lengthAdjust="spacingAndGlyphs">Peripheral Library</text>
<text class="p" x="226.50" y="403.00" textLength="57.50" lengthAdjust="spacingAndGlyphs">MEMORY</text>
<polygon points="293.85,398.25 300.25,392.15 306.65,398.25 300.25,404.35" fill="#7cf67c"/>
<path d="M293.85 398.25L300.25 392.15" stroke="#2e2e2e" stroke-width="0.9" fill="none"/>
<path d="M300.25 392.15L306.65 398.25" stroke="#8d7f8d" stroke-width="0.6" fill="none"/>
<path d="M306.65 398.25L300.25 404.35" stroke="#f2f2f2" stroke-width="0.9" fill="none"/>
<path d="M300.25 404.35L293.85 398.25" stroke="#9a909a" stroke-width="0.5" fill="none"/>
<rect x="53.5" y="432.5" width="116" height="61" rx="3.5" fill="none" stroke="#efefef"/>
<rect x="54.5" y="433.5" width="114" height="59" rx="2.5" fill="#dadada" stroke="#8e8e8e"/>
<text class="t" x="99.25" y="447.00" textLength="22.75" lengthAdjust="spacingAndGlyphs">TC2</text>
<text class="s" x="63.50" y="465.00" textLength="96.00" lengthAdjust="spacingAndGlyphs">Peripheral Library</text>
<text class="p" x="125.75" y="485.00" textLength="26.75" lengthAdjust="spacingAndGlyphs">TMR</text>
<polygon points="163.1,480.25 169.5,474.15 175.9,480.25 169.5,486.35" fill="#fdf78b"/>
<path d="M163.1 480.25L169.5 474.15" stroke="#2e2e2e" stroke-width="0.9" fill="none"/>
<path d="M169.5 474.15L175.9 480.25" stroke="#8d7f8d" stroke-width="0.6" fill="none"/>
<path d="M175.9 480.25L169.5 486.35" stroke="#f2f2f2" stroke-width="0.9" fill="none"/>
<path d="M169.5 486.35L163.1 480.25" stroke="#9a909a" stroke-width="0.5" fill="none"/>
<rect x="186.5" y="430.5" width="116" height="37" rx="3.5" fill="none" stroke="#efefef"/>
<rect x="187.5" y="431.5" width="114" height="35" rx="2.5" fill="#dadada" stroke="#8e8e8e"/>
<text class="t" x="233.25" y="445.00" textLength="21.75" lengthAdjust="spacingAndGlyphs">EIC</text>
<text class="s" x="196.50" y="463.00" textLength="96.00" lengthAdjust="spacingAndGlyphs">Peripheral Library</text>
<rect x="54.5" y="509.5" width="116" height="61" rx="3.5" fill="none" stroke="#efefef"/>
<rect x="55.5" y="510.5" width="114" height="59" rx="2.5" fill="#dadada" stroke="#8e8e8e"/>
<text class="t" x="100.75" y="524.00" textLength="22.75" lengthAdjust="spacingAndGlyphs">TC3</text>
<text class="s" x="64.50" y="542.00" textLength="96.00" lengthAdjust="spacingAndGlyphs">Peripheral Library</text>
<text class="p" x="127.00" y="562.00" textLength="26.75" lengthAdjust="spacingAndGlyphs">TMR</text>
<polygon points="163.85,557.5 170.25,551.4 176.65,557.5 170.25,563.6" fill="#fdf78b"/>
<path d="M163.85 557.5L170.25 551.4" stroke="#2e2e2e" stroke-width="0.9" fill="none"/>
<path d="M170.25 551.4L176.65 557.5" stroke="#8d7f8d" stroke-width="0.6" fill="none"/>
<path d="M176.65 557.5L170.25 563.6" stroke="#f2f2f2" stroke-width="0.9" fill="none"/>
<path d="M170.25 563.6L163.85 557.5" stroke="#9a909a" stroke-width="0.5" fill="none"/>
<rect x="183.5" y="477.5" width="196" height="83" rx="3.5" fill="none" stroke="#00ff00"/>
<rect x="184.5" y="478.5" width="194" height="81" rx="2.5" fill="#dadada" stroke="#cbc2cb"/>
<text class="t"><tspan x="215.25" y="492.00" textLength="23.22" lengthAdjust="spacingAndGlyphs">APP</tspan><tspan x="238.87" y="491.00" textLength="8.30" lengthAdjust="spacingAndGlyphs">_</tspan><tspan x="247.57" y="492.00" textLength="38.03" lengthAdjust="spacingAndGlyphs">TIMER</tspan><tspan x="286.00" y="491.00" textLength="8.30" lengthAdjust="spacingAndGlyphs">_</tspan><tspan x="294.70" y="492.00" textLength="51.80" lengthAdjust="spacingAndGlyphs">SERVICE</tspan></text>
<text class="s" x="193.50" y="510.00" textLength="176.00" lengthAdjust="spacingAndGlyphs">Software Timer Using FreeRTOS</text>
<text class="p"><tspan x="209.50" y="530.00" textLength="43.70" lengthAdjust="spacingAndGlyphs">Device</tspan><tspan x="253.60" y="529.00" textLength="9.40" lengthAdjust="spacingAndGlyphs">_</tspan><tspan x="263.40" y="530.00" textLength="52.35" lengthAdjust="spacingAndGlyphs">Support</tspan></text>
<circle cx="193.5" cy="525.5" r="4" fill="#7cf67c" stroke="#161616" stroke-width="1.1"/>
<text class="p"><tspan x="210.25" y="552.00" textLength="26.31" lengthAdjust="spacingAndGlyphs">APP</tspan><tspan x="236.96" y="551.00" textLength="9.40" lengthAdjust="spacingAndGlyphs">_</tspan><tspan x="246.76" y="552.00" textLength="41.15" lengthAdjust="spacingAndGlyphs">TIMER</tspan><tspan x="288.31" y="551.00" textLength="9.40" lengthAdjust="spacingAndGlyphs">_</tspan><tspan x="298.11" y="552.00" textLength="55.64" lengthAdjust="spacingAndGlyphs">SERVICE</tspan></text>
<circle cx="370.5" cy="547.5" r="4" fill="#7cf67c" stroke="#161616" stroke-width="1.1"/>
<rect x="184.5" y="568.5" width="157" height="125" rx="3.5" fill="none" stroke="#efefef"/>
<rect x="185.5" y="569.5" width="155" height="123" rx="2.5" fill="#dadada" stroke="#8e8e8e"/>
<text class="t" x="194.25" y="583.00" textLength="137.50" lengthAdjust="spacingAndGlyphs">BLE OTA APP SERVICE</text>
<text class="s" x="206.50" y="601.00" textLength="113.00" lengthAdjust="spacingAndGlyphs">BLE OTA App Service</text>
<text class="p" x="210.25" y="621.00" textLength="68.50" lengthAdjust="spacingAndGlyphs">App Timer</text>
<circle cx="194.5" cy="616.5" r="4" fill="#7cf67c" stroke="#161616" stroke-width="1.1"/>
<text class="p" x="210.25" y="643.00" textLength="53.00" lengthAdjust="spacingAndGlyphs">BLE DIS</text>
<circle cx="194.5" cy="638.5" r="4" fill="#7cf67c" stroke="#161616" stroke-width="1.1"/>
<text class="p" x="210.25" y="665.00" textLength="103.50" lengthAdjust="spacingAndGlyphs">BLE OTA Profile</text>
<circle cx="194.5" cy="660.5" r="4" fill="#fdf78b" stroke="#161616" stroke-width="1.1"/>
<text class="p" x="210.25" y="687.00" textLength="37.50" lengthAdjust="spacingAndGlyphs">RCON</text>
<circle cx="194.5" cy="682.5" r="4" fill="#fdf78b" stroke="#161616" stroke-width="1.1"/>
<rect x="399.5" y="410.5" width="161" height="107" rx="3.5" fill="none" stroke="#efefef"/>
<rect x="400.5" y="411.5" width="159" height="105" rx="2.5" fill="#dadada" stroke="#8e8e8e"/>
<text class="t"><tspan x="429.25" y="425.00" textLength="24.48" lengthAdjust="spacingAndGlyphs">PDS</tspan><tspan x="454.13" y="424.00" textLength="8.30" lengthAdjust="spacingAndGlyphs">_</tspan><tspan x="462.83" y="425.00" textLength="68.67" lengthAdjust="spacingAndGlyphs">SubSystem</tspan></text>
<text class="s" x="414.50" y="443.00" textLength="130.75" lengthAdjust="spacingAndGlyphs">Persistant Data Storage</text>
<text class="p"><tspan x="425.25" y="463.00" textLength="43.81" lengthAdjust="spacingAndGlyphs">Device</tspan><tspan x="469.46" y="462.00" textLength="9.40" lengthAdjust="spacingAndGlyphs">_</tspan><tspan x="479.26" y="463.00" textLength="52.49" lengthAdjust="spacingAndGlyphs">Support</tspan></text>
<circle cx="409.5" cy="458.5" r="4" fill="#7cf67c" stroke="#161616" stroke-width="1.1"/>
<text class="p"><tspan x="423.50" y="485.00" textLength="26.71" lengthAdjust="spacingAndGlyphs">PDS</tspan><tspan x="450.61" y="484.00" textLength="9.40" lengthAdjust="spacingAndGlyphs">_</tspan><tspan x="460.41" y="485.00" textLength="73.84" lengthAdjust="spacingAndGlyphs">SubSystem</tspan></text>
<circle cx="551.5" cy="480.5" r="4" fill="#7cf67c" stroke="#161616" stroke-width="1.1"/>
<text class="p" x="414.50" y="509.00" textLength="57.50" lengthAdjust="spacingAndGlyphs">MEMORY</text>
<polygon points="392.85,504.25 399.25,498.15 405.65,504.25 399.25,510.35" fill="#7cf67c"/>
<path d="M392.85 504.25L399.25 498.15" stroke="#2e2e2e" stroke-width="0.9" fill="none"/>
<path d="M399.25 498.15L405.65 504.25" stroke="#8d7f8d" stroke-width="0.6" fill="none"/>
<path d="M405.65 504.25L399.25 510.35" stroke="#f2f2f2" stroke-width="0.9" fill="none"/>
<path d="M399.25 510.35L392.85 504.25" stroke="#9a909a" stroke-width="0.5" fill="none"/>
<rect x="402.5" y="535.5" width="116" height="61" rx="3.5" fill="none" stroke="#efefef"/>
<rect x="403.5" y="536.5" width="114" height="59" rx="2.5" fill="#dadada" stroke="#8e8e8e"/>
<text class="t" x="448.00" y="550.00" textLength="23.75" lengthAdjust="spacingAndGlyphs">RTC</text>
<text class="s" x="412.50" y="568.00" textLength="96.00" lengthAdjust="spacingAndGlyphs">Peripheral Library</text>
<text class="p" x="475.00" y="588.00" textLength="26.75" lengthAdjust="spacingAndGlyphs">TMR</text>
<polygon points="512.1,583.25 518.5,577.15 524.9,583.25 518.5,589.35" fill="#7cf67c"/>
<path d="M512.1 583.25L518.5 577.15" stroke="#2e2e2e" stroke-width="0.9" fill="none"/>
<path d="M518.5 577.15L524.9 583.25" stroke="#8d7f8d" stroke-width="0.6" fill="none"/>
<path d="M524.9 583.25L518.5 589.35" stroke="#f2f2f2" stroke-width="0.9" fill="none"/>
<path d="M518.5 589.35L512.1 583.25" stroke="#9a909a" stroke-width="0.5" fill="none"/>
<rect x="400.5" y="607.5" width="147" height="65" rx="3.5" fill="none" stroke="#efefef"/>
<rect x="401.5" y="608.5" width="145" height="63" rx="2.5" fill="#dadada" stroke="#8e8e8e"/>
<text class="t" x="410.50" y="622.00" textLength="127.00" lengthAdjust="spacingAndGlyphs">Over-The-Air Service</text>
<text class="p" x="426.50" y="646.00" textLength="64.25" lengthAdjust="spacingAndGlyphs">BLE Stack</text>
<circle cx="410.5" cy="641.5" r="4" fill="#7cf67c" stroke="#161616" stroke-width="1.1"/>
<text class="p"><tspan x="462.50" y="668.00" textLength="24.13" lengthAdjust="spacingAndGlyphs">BLE</tspan><tspan x="487.03" y="667.00" textLength="9.40" lengthAdjust="spacingAndGlyphs">_</tspan><tspan x="496.83" y="668.00" textLength="34.17" lengthAdjust="spacingAndGlyphs">OTAS</tspan></text>
<polygon points="540.6,663.25 547,657.15 553.4,663.25 547,669.35" fill="#7cf67c"/>
<path d="M540.6 663.25L547 657.15" stroke="#2e2e2e" stroke-width="0.9" fill="none"/>
<path d="M547 657.15L553.4 663.25" stroke="#8d7f8d" stroke-width="0.6" fill="none"/>
<path d="M553.4 663.25L547 669.35" stroke="#f2f2f2" stroke-width="0.9" fill="none"/>
<path d="M547 669.35L540.6 663.25" stroke="#9a909a" stroke-width="0.5" fill="none"/>
<rect x="581.5" y="607.5" width="170" height="65" rx="3.5" fill="none" stroke="#efefef"/>
<rect x="582.5" y="608.5" width="168" height="63" rx="2.5" fill="#dadada" stroke="#8e8e8e"/>
<text class="t" x="605.50" y="622.00" textLength="120.75" lengthAdjust="spacingAndGlyphs">Over-The-Air Profile</text>
<text class="p" x="607.50" y="646.00" textLength="64.25" lengthAdjust="spacingAndGlyphs">BLE Stack</text>
<circle cx="591.5" cy="641.5" r="4" fill="#7cf67c" stroke="#161616" stroke-width="1.1"/>
<text class="p" x="596.50" y="668.00" textLength="144.00" lengthAdjust="spacingAndGlyphs">Over-The-Air Service</text>
<polygon points="575.1,663.25 581.5,657.15 587.9,663.25 581.5,669.35" fill="#7cf67c"/>
<path d="M575.1 663.25L581.5 657.15" stroke="#2e2e2e" stroke-width="0.9" fill="none"/>
<path d="M581.5 657.15L587.9 663.25" stroke="#8d7f8d" stroke-width="0.6" fill="none"/>
<path d="M587.9 663.25L581.5 669.35" stroke="#f2f2f2" stroke-width="0.9" fill="none"/>
<path d="M581.5 669.35L575.1 663.25" stroke="#9a909a" stroke-width="0.5" fill="none"/>
<rect x="624.5" y="82.5" width="126" height="151" rx="3.5" fill="none" stroke="#efefef"/>
<rect x="625.5" y="83.5" width="124" height="149" rx="2.5" fill="#dadada" stroke="#8e8e8e"/>
<path d="M626 160.5H629M700 160.5H703M717 160.5H727M741 160.5H749" stroke="#848484" fill="none"/>
<text class="t" x="633.50" y="164.00" textLength="61.00" lengthAdjust="spacingAndGlyphs">Instances</text>
<rect x="703.5" y="152.5" width="13" height="13" fill="#dcdcdc" stroke="#f0f0f0"/><rect x="704.5" y="153.5" width="11" height="11" fill="none" stroke="#cdcdcd" stroke-width="0.7"/>
<rect x="727.5" y="152.5" width="13" height="13" fill="#dcdcdc" stroke="#f0f0f0"/><rect x="728.5" y="153.5" width="11" height="11" fill="none" stroke="#cdcdcd" stroke-width="0.7"/>
<rect x="706.5" y="157.8" width="7" height="2" fill="#444"/>
<rect x="730.3" y="157.8" width="7.4" height="2" fill="#444"/><rect x="733" y="155.1" width="2" height="7.4" fill="#444"/>
<path d="M647 178.5H626.5V231.5H748.5V178.5H723" stroke="#3c3c3c" fill="none"/>
<path d="M647 179.5H627.5V230.5" stroke="#f4f4f4" fill="none"/>
<text class="t" x="651.50" y="183.00" textLength="65.75" lengthAdjust="spacingAndGlyphs">Instance 0</text>
<text class="t" x="657.25" y="97.00" textLength="60.50" lengthAdjust="spacingAndGlyphs">CONSOLE</text>
<text class="s" x="645.50" y="115.00" textLength="83.00" lengthAdjust="spacingAndGlyphs">System Service</text>
<text class="p" x="650.75" y="135.00" textLength="84.25" lengthAdjust="spacingAndGlyphs">Core Service</text>
<circle cx="634.5" cy="130.5" r="4" fill="#7cf67c" stroke="#161616" stroke-width="1.1"/>
<text class="p" x="639.50" y="199.00" textLength="35.75" lengthAdjust="spacingAndGlyphs">UART</text>
<polygon points="618.35,194 624.75,187.9 631.15,194 624.75,200.1" fill="#7cf67c"/>
<path d="M618.35 194L624.75 187.9" stroke="#2e2e2e" stroke-width="0.9" fill="none"/>
<path d="M624.75 187.9L631.15 194" stroke="#8d7f8d" stroke-width="0.6" fill="none"/>
<path d="M631.15 194L624.75 200.1" stroke="#f2f2f2" stroke-width="0.9" fill="none"/>
<path d="M624.75 200.1L618.35 194" stroke="#9a909a" stroke-width="0.5" fill="none"/>
<text class="p"><tspan x="637.25" y="219.00" textLength="24.98" lengthAdjust="spacingAndGlyphs">SYS</tspan><tspan x="662.63" y="218.00" textLength="9.40" lengthAdjust="spacingAndGlyphs">_</tspan><tspan x="672.43" y="219.00" textLength="61.32" lengthAdjust="spacingAndGlyphs">CONSOLE</tspan></text>
<rect x="744" y="208" width="13" height="13" fill="#e2e2e2"/>
<rect x="744" y="208" width="12" height="12" fill="#7a7a7a"/>
<rect x="745" y="209" width="11" height="11" fill="#fdf78b"/>
<g stroke="#ffffff" stroke-width="1" fill="none" shape-rendering="crispEdges">
<line x1="505.5" y1="166.4" x2="624.75" y2="194"/>
<line x1="909.5" y1="137.5" x2="765.25" y2="226.5"/>
<line x1="538.6" y1="300.4" x2="185.25" y2="330.25"/>
<line x1="538.6" y1="300.4" x2="398.5" y2="390"/>
<line x1="300.25" y1="398.25" x2="399.25" y2="504.25"/>
<line x1="518.5" y1="583.25" x2="626.25" y2="494.5"/>
<line x1="626.25" y1="470.5" x2="910.25" y2="573.25"/>
<line x1="547" y1="663.25" x2="581.5" y2="663.25"/>
</g>
<rect x="953.5" y="79" width="14.2" height="563.5" fill="#cdcdcd"/>
<path d="M957.0 73.5L960.5 70.0L964.0 73.5" stroke="#585858" stroke-width="1.8" fill="none"/>
<path d="M957.0 688L960.5 691.5L964.0 688" stroke="#585858" stroke-width="1.8" fill="none"/>
<rect x="31" y="699.3" width="787" height="14.2" fill="#cdcdcd"/>
<path d="M24 703.0L20.5 706.5L24 710.0" stroke="#585858" stroke-width="1.8" fill="none"/>
<path d="M942 703.0L945.5 706.5L942 710.0" stroke="#585858" stroke-width="1.8" fill="none"/>
</svg></body></html>
